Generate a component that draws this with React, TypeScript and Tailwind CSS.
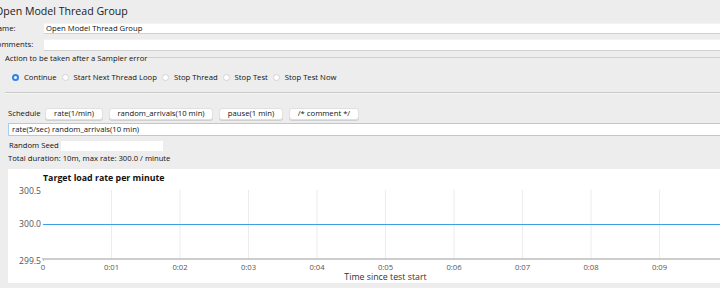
import React from "react";

const font = { fontFamily: "'Open Sans', 'Noto Sans', sans-serif" };

function Radio({ checked, label }: { checked?: boolean; label: string }) {
  return (
    <div className="flex items-center gap-[5px]">
      {checked ? (
        <span className="w-[7px] h-[7px] rounded-full bg-[#2d82ea] flex items-center justify-center shrink-0">
          <span className="w-[3px] h-[3px] rounded-full bg-white" />
        </span>
      ) : (
        <span className="w-[7px] h-[7px] rounded-full bg-white border border-[#d4d4d4] shrink-0" />
      )}
      <span className="leading-none">{label}</span>
    </div>
  );
}

function Btn({ children, w }: { children: React.ReactNode; w: string }) {
  return (
    <div
      className={`${w} h-[12px] box-border rounded-[3px] bg-white border border-[#e0e0e0] shadow-[0_1px_0_rgba(0,0,0,0.12)] flex items-center justify-center leading-none whitespace-nowrap shrink-0`}
    >
      {children}
    </div>
  );
}

function Chart() {
  const left = 35;
  const step = 68.5;
  const ticks = Array.from({ length: 11 }, (_, i) => i);
  return (
    <svg width="712" height="114" className="block" style={{ fontFamily: "'Open Sans', sans-serif" }}>
      <text x={35} y={11.5} fontSize="8.8" fontWeight="700" fill="#111">
        Target load rate per minute
      </text>
      {ticks.slice(1).map((i) => (
        <line key={i} x1={left + i * step} x2={left + i * step} y1={21} y2={90} stroke="#ececec" strokeWidth="1" />
      ))}
      <text x={33} y={25} fontSize="8.6" fill="#555" textAnchor="end">300.5</text>
      <text x={33} y={58} fontSize="8.6" fill="#555" textAnchor="end">300.0</text>
      <text x={33} y={95} fontSize="8.6" fill="#555" textAnchor="end">299.5</text>
      <line x1={left} x2={712} y1={55.5} y2={55.5} stroke="#3b9ee3" strokeWidth="1" />
      <line x1={left} x2={712} y1={90} y2={90} stroke="#bdbdbd" strokeWidth="1.5" />
      <line x1={left - 1} x2={left + 1} y1={89} y2={92} stroke="#bdbdbd" strokeWidth="1" />
      {ticks.map((i) => (
        <text key={i} x={left + i * step} y={101} fontSize="7.7" fill="#555" textAnchor="middle">
          {i === 0 ? "0" : `0:${String(i).padStart(2, "0")}`}
        </text>
      ))}
      <text x={377.5} y={110.5} fontSize="8.8" fill="#333" textAnchor="middle">
        Time since test start
      </text>
    </svg>
  );
}

export default function App() {
  return (
    <div
      className="w-[720px] h-[288px] overflow-hidden bg-[#ededed] text-[7.7px] text-[#111] flex flex-col whitespace-nowrap"
      style={font}
    >
      <div className="h-[23px] shrink-0 flex items-center -ml-[5px] text-[10.6px] text-[#1a1a1a]">Open Model Thread Group</div>
      <div className="h-[11px] shrink-0 flex items-center">
        <div className="w-[52px] -ml-[8px] shrink-0">Name:</div>
        <div className="flex-1 h-[11px] box-border bg-white border-t border-t-[#f3f3f3] border-b border-b-[#d0d0d0] flex items-center pl-[2px] leading-none">
          Open Model Thread Group
        </div>
      </div>
      <div className="h-[5px] shrink-0" />
      <div className="h-[12px] shrink-0 flex items-center">
        <div className="w-[52px] -ml-[8px] shrink-0">Comments:</div>
        <div className="flex-1 h-[12px] box-border bg-white border-t border-t-[#f3f3f3] border-b border-b-[#d0d0d0]" />
      </div>
      <div className="h-[16px] shrink-0 flex items-center">
        <div className="ml-[5px] leading-none">Action to be taken after a Sampler error</div>
        <div className="flex-1 h-[1px] bg-[#d0d0d0] relative -top-[2px]" />
      </div>
      <div className="h-[22px] shrink-0 flex items-center gap-[5px] pl-[12px]">
        <Radio checked label="Continue" />
        <Radio label="Start Next Thread Loop" />
        <Radio label="Stop Thread" />
        <Radio label="Stop Test" />
        <Radio label="Stop Test Now" />
      </div>
      <div className="h-[3px] shrink-0" />
      <div className="ml-[5px] h-[1px] shrink-0 bg-[#c9c9c9]" />
      <div className="ml-[5px] h-[1px] shrink-0 bg-[#f5f5f5]" />
      <div className="h-[14px] shrink-0" />
      <div className="h-[12px] shrink-0 flex items-center">
        <div className="ml-[8px] w-[37px] shrink-0">Schedule</div>
        <div className="flex items-center gap-[6px]">
          <Btn w="w-[58px]">rate(1/min)</Btn>
          <Btn w="w-[104px]">random_arrivals(10 min)</Btn>
          <Btn w="w-[64px]">pause(1 min)</Btn>
          <Btn w="w-[70px]">/* comment */</Btn>
        </div>
      </div>
      <div className="h-[3px] shrink-0" />
      <div className="ml-[8px] h-[13px] shrink-0 box-border bg-white border border-[#a3cff3] border-r-0 flex items-center pl-[3px] leading-none">
        rate(5/sec) random_arrivals(10 min)
      </div>
      <div className="h-[5px] shrink-0" />
      <div className="h-[10px] shrink-0 flex items-center">
        <div className="ml-[9px] w-[52px] shrink-0">Random Seed</div>
        <div className="w-[102px] h-[10px] bg-white" />
      </div>
      <div className="h-[16px] shrink-0 flex items-center ml-[8px]">Total duration: 10m, max rate: 300.0 / minute</div>
      <div className="h-[2px] shrink-0" />
      <div className="ml-[8px] h-[114px] shrink-0 bg-white overflow-hidden">
        <Chart />
      </div>
    </div>
  );
}
